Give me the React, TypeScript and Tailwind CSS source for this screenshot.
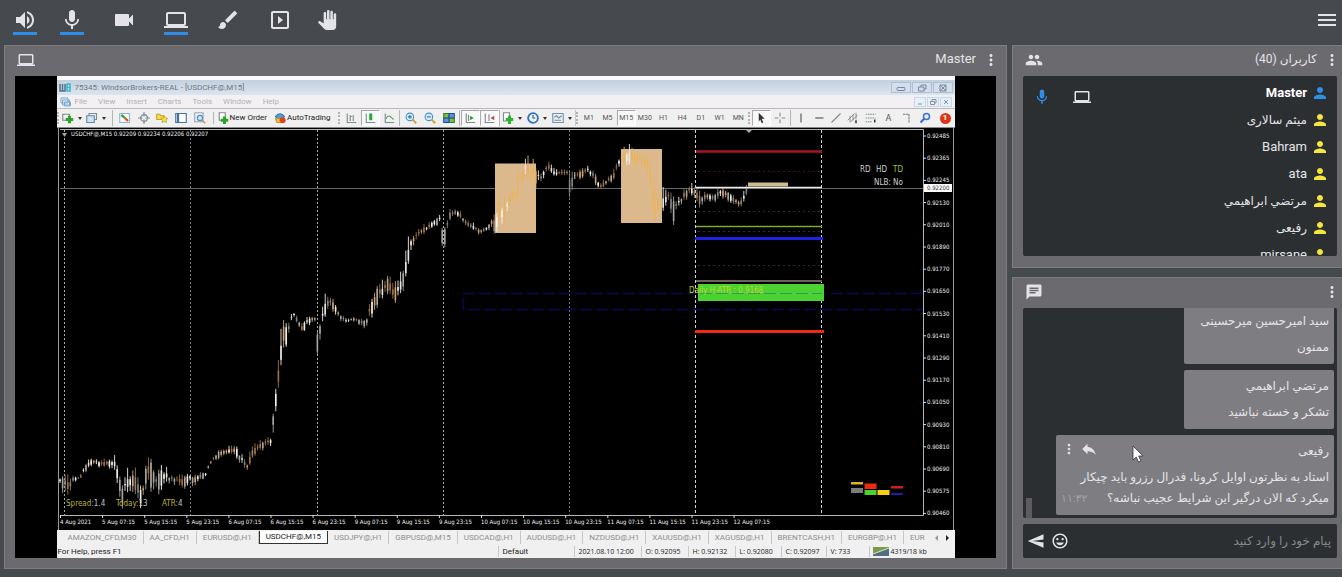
import { useState } from "react";
import type { ReactNode } from "react";
import clsx from "clsx";
import {
    MdBrush,
    MdChat,
    MdLaptop,
    MdMenu,
    MdMic,
    MdMoreVert,
    MdOutlineInsertEmoticon,
    MdOutlineSlideshow,
    MdPanTool,
    MdPeople,
    MdPerson,
    MdReply,
    MdSend,
    MdVideocam,
    MdVolumeUp,
} from "react-icons/md";

const users = [
    { name: "Master", latin: true },
    { name: "میثم سالاری", latin: false },
    { name: "Bahram", latin: true },
    { name: "ata", latin: true },
    { name: "مرتضي ابراهيمي", latin: false },
    { name: "رفیعی", latin: false },
    { name: "mirsane", latin: true },
];

const tabs = [
    "AMAZON_CFD,M30", "AA_CFD,H1", "EURUSD@,H1", "USDCHF@,M15", "USDJPY@,H1", "GBPUSD@,M15", "USDCAD@,H1",
    "AUDUSD@,H1", "NZDUSD@,H1", "XAUUSD@,H1", "XAGUSD@,H1", "BRENTCASH,H1", "EURGBP@,H1", "EUR",
];

const prices = [
    "0.92485", "0.92365", "0.92245", "0.92130", "0.92010", "0.91890", "0.91770", "0.91650", "0.91530",
    "0.91410", "0.91290", "0.91170", "0.91050", "0.90930", "0.90810", "0.90690", "0.90575", "0.90460",
];

const times = [
    "4 Aug 2021", "5 Aug 07:15", "5 Aug 15:15", "5 Aug 23:15", "6 Aug 07:15", "6 Aug 15:15", "6 Aug 23:15",
    "9 Aug 07:15", "9 Aug 15:15", "9 Aug 23:15", "10 Aug 07:15", "10 Aug 15:15", "10 Aug 23:15",
    "11 Aug 07:15", "11 Aug 15:15", "11 Aug 23:15", "12 Aug 07:15",
];

// x, middle of the price, spread of the candles around it
const track: [number, number, number][] = [
    [60, 480, 5], [64, 482, 16], [69, 488, 14], [73, 479, 4], [80, 478, 2], [85, 468, 5], [92, 461, 5],
    [100, 464, 4], [108, 463, 5], [114, 463, 9], [118, 475, 14], [122, 494, 16], [128, 483, 15], [134, 479, 15],
    [142, 498, 14], [146, 472, 16], [152, 470, 18], [156, 482, 16], [162, 475, 14], [170, 478, 9], [182, 482, 8],
    [190, 477, 7], [194, 480, 9], [200, 476, 4], [206, 474, 3], [210, 463, 4], [218, 454, 5], [228, 451, 4],
    [236, 450, 7], [240, 458, 8], [247, 467, 7], [252, 453, 7], [260, 446, 6], [266, 443, 6], [271, 441, 8],
    [273, 420, 22], [276, 397, 14], [280, 362, 20], [283, 332, 20], [287, 333, 10], [290, 325, 8], [293, 312, 5],
    [297, 320, 4], [302, 328, 4], [308, 321, 6], [315, 318, 6], [317, 342, 12], [320, 328, 15], [325, 308, 12],
    [329, 301, 7], [334, 306, 8], [340, 316, 7], [347, 322, 3], [354, 319, 3], [361, 322, 4], [366, 323, 7],
    [370, 310, 12], [374, 302, 12], [377, 294, 12], [383, 292, 11], [388, 282, 10], [393, 293, 11], [399, 290, 12],
    [404, 275, 13], [408, 256, 14], [411, 242, 14], [416, 238, 10], [420, 232, 7], [427, 228, 5], [433, 223, 4],
    [440, 219, 5], [443, 240, 12], [446, 230, 11], [450, 215, 6], [456, 212, 3], [461, 216, 5], [466, 223, 5],
    [473, 227, 4], [480, 232, 5], [487, 228, 3], [492, 222, 8], [496, 226, 12], [499, 207, 15], [503, 214, 18],
    [508, 203, 13], [516, 190, 15], [520, 180, 15], [526, 169, 13], [533, 172, 18], [540, 180, 9], [545, 170, 8],
    [549, 167, 6], [555, 174, 4], [562, 173, 5], [568, 173, 5], [569, 186, 16], [573, 180, 10], [578, 175, 6],
    [588, 170, 5], [594, 176, 7], [600, 187, 4], [607, 181, 4], [614, 175, 6], [618, 163, 8], [622, 157, 9],
    [630, 157, 11], [640, 159, 8], [647, 163, 8], [650, 172, 16], [653, 200, 24], [656, 210, 18], [660, 200, 15],
    [664, 203, 12], [668, 196, 8], [673, 208, 16], [678, 205, 9], [684, 195, 8], [690, 190, 7], [696, 194, 8],
    [700, 200, 11], [706, 196, 6], [714, 198, 5], [720, 192, 8], [727, 194, 6], [734, 200, 6], [740, 204, 5],
    [744, 198, 8], [747, 188, 5],
];

const candleColors = ["#e8e6e2", "#a3703f", "#85827e", "#cfa074", "#f2efe9", "#a8a49e"];

const priceAt = (x: number) => {
    let i = 0;
    while (i < track.length - 2 && track[i + 1][0] <= x) i++;
    const [x0, y0, s0] = track[i];
    const [x1, y1, s1] = track[i + 1];
    const t = (x - x0) / (x1 - x0);
    return [y0 + (y1 - y0) * t, s0 + (s1 - s0) * t];
};

function buildCandles() {
    const out: { x: number; top: number; bottom: number; open: number; close: number; color: string }[] = [];
    for (let x = 60; x < 748; x += 2.6) {
        const [y, s] = priceAt(x);
        const a = Math.abs(Math.sin(x * 12.9) * 43.7) % 1;
        const b = Math.abs(Math.sin(x * 4.7) * 91.3) % 1;
        const spread = s * (0.3 + a * 0.7);
        const mid = y + (b - 0.5) * s * 0.6;
        out.push({
            x,
            top: mid - spread,
            bottom: mid + spread,
            open: mid - spread * b * 0.8,
            close: mid + spread * a * 0.8,
            color: candleColors[Math.floor(b * 6)],
        });
    }
    return out;
}

const candles = buildCandles();

function PriceChart() {
    return (
        <svg viewBox="57 127 898 403" className="w-full h-full font-['DejaVu_Sans_Condensed','DejaVu_Sans',sans-serif]" role="img" aria-label="USDCHF M15">
            <rect x="57" y="127" width="898" height="403" fill="#000" />
            <path d="M57 127.500H955" stroke="#8a8a8a" />
            <path d="M58.500 127V530M953.500 127V530" stroke="#9b9b98" />
            <path d="M60 129.500H923.500V515.500H60" stroke="#b5b5b5" fill="none" />

            {[64.5, 190.5, 317.5, 443.5, 569.5].map((x) => (
                <path key={x} d={`M${x} 130V515`} stroke={x === 190.5 || x === 569.5 ? "#77776f" : "#a9a9a2"} strokeDasharray="2 2" />
            ))}
            <path d="M695.500 130V515M821.500 130V515" stroke="#d0d0d0" strokeDasharray="3 2" />

            <path d="M923 293.500H463.500V309.500H923" stroke="#08085c" strokeWidth="1.500" strokeDasharray="12 4" fill="none" />
            <path d="M60 188.500H923" stroke="#66666e" />

            <rect x="495" y="163.500" width="41" height="69.500" fill="#dcb98c" />
            <rect x="621" y="149" width="41" height="74" fill="#dcb98c" />

            {candles.map((c) => {
                const onBox = (c.x > 495 && c.x < 536) || (c.x > 621 && c.x < 662);
                const bright = c.color === "#f2efe9" || c.color === "#e8e6e2";
                return (
                    <g key={c.x} stroke={onBox && !bright ? "#e9b35e" : c.color}>
                        <path d={`M${c.x} ${c.top}V${c.bottom}`} strokeWidth="0.900" />
                        <path d={`M${c.x} ${c.open}V${c.close}`} strokeWidth="1.600" />
                    </g>
                );
            })}

            <path d="M696 151.500H822" stroke="#a81623" strokeWidth="2.500" />
            <path d="M698 171.500H820" stroke="#4d0d12" strokeDasharray="2 3" />
            <path d="M696 187.500H822" stroke="#e9e9e9" strokeWidth="1.500" />
            <rect x="748" y="182.500" width="40" height="4" fill="#cdbc92" />
            <path d="M698 211.500H820M698 231.500H820M698 265.500H820" stroke="#2f2f2f" strokeDasharray="2 3" />
            <path d="M696 226.500H822" stroke="#7fa82c" strokeWidth="1.500" />
            <path d="M695 238.500H823" stroke="#1f22e0" strokeWidth="3" />
            <path d="M696 281H822" stroke="#6c625b" strokeWidth="2" />
            <rect x="698" y="284" width="126" height="17" fill="#4bd132" />
            <path d="M700 293.500H822" stroke="#2f9b54" strokeDasharray="12 4" />
            <path d="M695 331.500H824" stroke="#ee2a12" strokeWidth="3" />
            <text x="689" y="293" fontSize="8" fill="#c6d62f">Daily H-ATR : 0.9168</text>
            <path d="M745 129h8l-4 4zM62 133h5l-2.500 4z" fill="#a9a9a9" />

            <text x="71" y="136" fontSize="6" fill="#f0f0f0">USDCHF@,M15 0.92209 0.92234 0.92206 0.92207</text>
            <g fontSize="8" fill="#cfcfcf">
                <text x="860" y="172">RD</text>
                <text x="876" y="172">HD</text>
                <text x="893" y="172" fill="#9fc43f">TD</text>
                <text x="874" y="185">NLB: No</text>
                <text x="66" y="506" fill="#b8b23a">Spread:<tspan fill="#b9c4d0">1.4</tspan></text>
                <text x="116" y="506" fill="#b8b23a">Today:<tspan fill="#b9c4d0">13</tspan></text>
                <text x="162" y="506" fill="#b8b23a">ATR:<tspan fill="#b9c4d0">4</tspan></text>
            </g>

            <rect x="851" y="482" width="12" height="2.500" fill="#d8b62c" />
            <rect x="851" y="488" width="12" height="5" fill="#7c7c7c" />
            <rect x="864.500" y="483.500" width="12" height="5.500" fill="#f02a12" />
            <rect x="864.500" y="490" width="12" height="5" fill="#4bd132" />
            <rect x="877.500" y="490" width="12" height="5" fill="#f7cf12" />
            <rect x="891" y="486" width="12" height="2.500" fill="#cf1d1d" />
            <rect x="891" y="493" width="12" height="2" fill="#1c1cb0" />

            <g fontSize="6" fill="#f0f0f0">
                {prices.map((p, i) => (
                    <g key={p}>
                        <path d={`M923 ${136 + i * 22.2}h3`} stroke="#dedede" />
                        <text x="927" y={138 + i * 22.2}>{p}</text>
                    </g>
                ))}
                {times.map((t, i) => (
                    <g key={t}>
                        <path d={`M${60.5 + i * 42.1} 515v3`} stroke="#dedede" />
                        <text x={60 + i * 42.1} y="524">{t}</text>
                    </g>
                ))}
            </g>
            <rect x="924" y="184" width="28" height="8" fill="#fff" />
            <text x="927" y="190" fontSize="6" fill="#333">0.92200</text>
        </svg>
    );
}

function Glyph({ children }: { children: ReactNode }) {
    return (
        <svg viewBox="0 0 16 16" className="w-3 h-3 shrink-0" fill="none" stroke="#7d8b90" strokeWidth="1.500">
            {children}
        </svg>
    );
}

function Tool({ label, pressed, drop, children }: { label: string; pressed?: boolean; drop?: boolean; children: ReactNode }) {
    return (
        <button
            aria-label={label}
            className={clsx(
                "flex-1 min-w-0 h-4 flex items-center justify-center border",
                pressed ? "border-[#a9a9a9] border-b-white border-r-white bg-[#f8f8f8]" : "border-transparent"
            )}
        >
            {children}
            {drop && <span className="ml-1 border-x-2 border-t-[3px] border-x-transparent border-t-[#333]" />}
        </button>
    );
}

function Grip() {
    return <span className="w-1 h-3 shrink-0 border-l-2 border-dotted border-[#b5b5b5]" />;
}

function TerminalToolbar() {
    return (
        <div className="h-[19px] shrink-0 flex items-center bg-[#f1f0f1] border-t border-[#b9b9bb] text-[8px] leading-none text-[#222]">
            <div className="w-[55px] shrink-0 flex items-center pr-1">
                <Grip />
                <Tool label="New chart" drop><Glyph><path d="M1 3h9v8H1z" /><path d="M10 5v10M5 10h10" stroke="#2aa52a" strokeWidth="4" /></Glyph></Tool>
                <Tool label="Profiles" drop><Glyph><path d="M4 5V2h10v8h-3" /><path d="M1 5h10v9H1z" fill="#d5e3f0" stroke="#5d86ad" /></Glyph></Tool>
            </div>
            <div className="w-[101px] shrink-0 flex items-center border-l border-[#b5b5b5] px-[3px]">
                <Tool label="Market watch"><Glyph><path d="M1 2h13v12H1z" fill="#fff" stroke="#8eb4d5" /><path d="m3 4 5 4" stroke="#3aa53a" strokeWidth="3" /><path d="m8 8 4 4" stroke="#d9502a" strokeWidth="3" /></Glyph></Tool>
                <Tool label="Data window"><Glyph><circle cx="8" cy="8" r="4.500" /><path d="M8 0v6M8 10v6M0 8h6M10 8h6" /></Glyph></Tool>
                <Tool label="Navigator"><Glyph><path d="M1 3h4l1 2h4v5H1z" fill="#f5e04a" stroke="#c3a52a" /><path d="m11 5 1.500 3 3 .5-2 2.500.5 3-3-1.500-3 1.500.5-3-2-2.500 3-.5z" fill="#f7e34d" stroke="#b9982a" strokeWidth="1" /></Glyph></Tool>
                <Tool label="Terminal"><Glyph><path d="M1 2h14v12H1z" fill="#fff" stroke="#46709c" /><path d="M4 2v12" stroke="#46709c" strokeWidth="3" /></Glyph></Tool>
                <Tool label="Strategy tester"><Glyph><path d="M1 1h11v12H1z" stroke="#8fa9c4" /><circle cx="8" cy="8" r="3.500" fill="#cfe5f6" stroke="#5e8dbb" /><path d="m11 11 4 4" stroke="#c59b3a" strokeWidth="2" /></Glyph></Tool>
            </div>
            <div className="w-[125px] shrink-0 flex items-center gap-[7px] border-l border-[#b5b5b5] pl-[3px]">
                <button className="flex items-center gap-px whitespace-nowrap">
                    <Glyph><path d="M3 1h8v10H3z" fill="#fff" /><path d="M10 6v10M5 11h10" stroke="#2aa52a" strokeWidth="4" /></Glyph>
                    New Order
                </button>
                <button className="flex items-center gap-px whitespace-nowrap">
                    <Glyph><path d="M2 6c3-5 9-5 12 0l-3 3H4z" fill="#5b9bd1" stroke="#3a78ad" /><path d="M2 9h9l-3 5H4z" fill="#efc63c" stroke="#c79a22" /><circle cx="11.500" cy="11" r="4" fill="#e0401c" stroke="none" /></Glyph>
                    AutoTrading
                </button>
            </div>
            <div className="w-[61px] shrink-0 flex items-center">
                <Grip />
                <Tool label="Bar chart"><Glyph><path d="M3 2v12h12M7 4v8M11 4v8M7 6h2" /></Glyph></Tool>
                <Tool label="Candlesticks" pressed><Glyph><path d="M3 2v12h12" /><path d="M9 2v9" stroke="#22a83a" strokeWidth="4" /></Glyph></Tool>
                <Tool label="Line chart"><Glyph><path d="M3 2v12h12" /><path d="M4 9c3-6 5-4 10 1" stroke="#5a9a5a" /></Glyph></Tool>
            </div>
            <div className="w-[60px] shrink-0 flex items-center border-l border-[#b5b5b5] pl-[2px]">
                <Tool label="Zoom in"><Glyph><circle cx="6.500" cy="6.500" r="5" fill="#d7ecfb" stroke="#4b8fc9" /><path d="M4 6.500h5M6.500 4v5" stroke="#2e6ea8" /><path d="m10 10 5 5" stroke="#d2a53a" strokeWidth="2.500" /></Glyph></Tool>
                <Tool label="Zoom out"><Glyph><circle cx="6.500" cy="6.500" r="5" fill="#d7ecfb" stroke="#4b8fc9" /><path d="M4 6.500h5" stroke="#2e6ea8" /><path d="m10 10 5 5" stroke="#d2a53a" strokeWidth="2.500" /></Glyph></Tool>
                <Tool label="Tile windows"><Glyph><path d="M1 2h7v6H1zM8 8h7v6H8z" fill="#7cc142" stroke="#3c7a2a" /><path d="M8 2h7v6H8zM1 8h7v6H1z" fill="#5296dd" stroke="#224f8d" /></Glyph></Tool>
            </div>
            <div className="w-10 shrink-0 flex items-center border-l border-[#b5b5b5] pl-px">
                <Tool label="Auto scroll" pressed><Glyph><path d="M3 2v12h12M6 4v8" /><path d="m8 5 5 3-5 3z" fill="#2ba53b" stroke="none" /></Glyph></Tool>
                <Tool label="Chart shift" pressed><Glyph><path d="M3 2v12h12M8 3v9" /><path d="m15 5-5 3 5 3z" fill="#a8543a" stroke="none" /></Glyph></Tool>
            </div>
            <div className="w-[76px] shrink-0 flex items-center border-l border-[#b5b5b5]">
                <Tool label="Indicators" drop><Glyph><path d="M2 1h8v11H2z" fill="#fff" /><path d="M10 5v11M5 10h10" stroke="#2cb52c" strokeWidth="4" /></Glyph></Tool>
                <Tool label="Periods" drop><Glyph><circle cx="8" cy="8" r="6.500" fill="#eaf4fd" stroke="#2e72b8" strokeWidth="2.500" /><path d="M8 4v4h3" stroke="#3b5575" /></Glyph></Tool>
                <Tool label="Templates" drop><Glyph><path d="M1 2h14v12H1z" fill="#e9f2f8" stroke="#6d93b5" /><path d="m3 7 3-2 3 3 4-3M3 11h9" /></Glyph></Tool>
            </div>
            <div className="w-[173px] shrink-0 flex items-center border-l border-[#c9c9c9] text-[7px] text-[#555]">
                <Grip />
                {["M1", "M5", "M15", "M30", "H1", "H4", "D1", "W1", "MN"].map((t) => (
                    <Tool key={t} label={t} pressed={t === "M15"}>{t}</Tool>
                ))}
            </div>
            <div className="w-[42px] shrink-0 flex items-center">
                <Grip />
                <Tool label="Cursor" pressed><Glyph><path d="m5 1 8 8H9l2 5-2 1-2-5-2 3z" fill="#333" stroke="none" /></Glyph></Tool>
                <Tool label="Crosshair"><Glyph><path d="M8 1v5M8 10v5M1 8h5M10 8h5" /></Glyph></Tool>
            </div>
            <div className="w-[125px] shrink-0 flex items-center border-l border-[#b5b5b5] pl-[2px] text-[#555]">
                <Tool label="Vertical line"><Glyph><path d="M8 2v12" stroke="#555" /></Glyph></Tool>
                <Tool label="Horizontal line"><Glyph><path d="M3 8h11" stroke="#555" /></Glyph></Tool>
                <Tool label="Trend line"><Glyph><path d="M2 14 14 2" /></Glyph></Tool>
                <Tool label="Channel"><Glyph><path d="m1 11 9-9M4 14 14 4M4 5v8M8 3v8M12 1v9" stroke="#777" strokeWidth="1" /><path d="M12 11v4" stroke="#333" strokeWidth="2" /></Glyph></Tool>
                <Tool label="Fibonacci"><Glyph><path d="M1 3h13M1 8h13M1 13h9" strokeDasharray="2 1" /><path d="M13 10v4" stroke="#333" strokeWidth="2" /></Glyph></Tool>
                <Tool label="Text"><span className="text-[9px]">A</span></Tool>
                <Tool label="Label"><Glyph><path d="M4 3h8v11" strokeDasharray="3 1" stroke="#777" /></Glyph></Tool>
            </div>
            <div className="flex-1 flex items-center justify-between pl-1 pr-1">
                <button aria-label="Search">
                    <Glyph><circle cx="10" cy="6" r="4" fill="#e4effc" stroke="#3a6fd0" strokeWidth="2" /><path d="m7 9-5 5" stroke="#3a6fd0" strokeWidth="3" /></Glyph>
                </button>
                <button className="w-[11px] h-[11px] rounded-full bg-[#dd3417] text-white text-[8px] font-bold leading-none">1</button>
            </div>
        </div>
    );
}

function Terminal() {
    const [tab, setTab] = useState("USDCHF@,M15");

    return (
        <div className="h-full max-w-full aspect-[898/482] flex flex-col overflow-hidden bg-[#f1f0f1] font-[Roboto,sans-serif]">
            <div className="h-1 shrink-0 bg-[#fafafc]" />
            <div className="h-[15px] shrink-0 flex items-center gap-1 px-[2px] bg-gradient-to-b from-[#c3d0dd] to-[#dbe5f0] text-[8px] leading-none text-[#6d7680]">
                <svg viewBox="0 0 12 10" className="w-3 h-[10px]" fill="none" strokeWidth="1.500">
                    <path d="M1 1v7h5V1M3.500 1v7" stroke="#4d7484" />
                    <path d="M8 1h3v3.500H8zM8 4.500h3V8H8z" stroke="#3db3cf" />
                </svg>
                <span>75345: WindsorBrokers-REAL - [USDCHF@,M15]</span>
                <div className="ml-auto flex gap-px">
                    {["Minimize", "Restore", "Close"].map((name) => (
                        <button key={name} aria-label={name} className="w-[20px] h-[11px] flex items-center justify-center border border-[#b0bfd0] bg-[#d3dfec]">
                            <svg viewBox="0 0 12 8" className="w-3 h-2" fill="none" stroke="#7b8697">
                                {name === "Minimize" && <rect x="2" y="3.500" width="8" height="3" rx="1" />}
                                {name === "Restore" && <path d="M5 3V1h5v4H8M2.500 3H8v4H2.500z" />}
                                {name === "Close" && <path d="M3 1h6v6H3zM3 1l6 6M9 1 3 7" />}
                            </svg>
                        </button>
                    ))}
                </div>
            </div>
            <div className="h-[13px] shrink-0 flex items-center px-[3px] bg-[#f2f0f2] text-[8px] leading-none text-[#b3b1b3]">
                <svg viewBox="0 0 12 10" className="w-3 h-[10px] mr-[3px]" fill="#e3eff9" stroke="#7fa9cf">
                    <path d="M1 1h7v5H1zM2.500 3h7v5h-7zM4.500 5h6v4h-6z" />
                </svg>
                <nav className="flex gap-[11px]">
                    {["File", "View", "Insert", "Charts", "Tools", "Window", "Help"].map((m) => (
                        <button key={m}>{m}</button>
                    ))}
                </nav>
                <div className="ml-auto flex gap-px">
                    {["Minimize chart", "Restore chart", "Close chart"].map((name) => (
                        <button key={name} aria-label={name} className="w-3 h-[10px] flex items-center justify-center border border-[#c8d8e6] bg-[#e8f0f7]">
                            <svg viewBox="0 0 8 8" className="w-2 h-2" fill="none" stroke="#8092a5">
                                {name === "Minimize chart" && <path d="M2 6h4" />}
                                {name === "Restore chart" && <path d="M3 3V1.500h4V5H5.500M1.500 3.500h4v3h-4z" />}
                                {name === "Close chart" && <path d="m2 2 4 4M6 2 2 6" />}
                            </svg>
                        </button>
                    ))}
                </div>
            </div>
            <TerminalToolbar />
            <div className="flex-1 min-h-0">
                <PriceChart />
            </div>
            <div className="h-[15px] shrink-0 flex items-center pl-[5px] pr-1 text-[8px] leading-none text-[#8f8f8f]">
                <div className="flex-1 min-w-0 flex items-center overflow-hidden">
                    {tabs.map((t) => (
                        <button
                            key={t}
                            onClick={() => setTab(t)}
                            className={clsx(
                                "shrink-0 h-[13px] px-[6px] whitespace-nowrap last:pr-0 last:border-0",
                                t === tab ? "bg-white text-[#222] border-x border-b border-[#333]" : "border-r border-[#c5c5c5]"
                            )}
                        >
                            {t}
                        </button>
                    ))}
                </div>
                <button aria-label="Previous tabs" className="ml-[3px] border-y-[3px] border-r-[3px] border-y-transparent border-r-[#999]" />
                <button aria-label="Next tabs" className="ml-2 mr-[2px] border-y-[3px] border-l-[3px] border-y-transparent border-l-[#222]" />
            </div>
            <div className="h-[13px] shrink-0 flex items-center text-[8px] leading-[11px] text-[#222] whitespace-nowrap">
                <span className="flex-1 pl-px">For Help, press F1</span>
                <span className="w-[76px] pl-1 border-l border-[#c9c9c9]">Default</span>
                <div className="flex font-['Open_Sans',sans-serif] text-[7px]">
                    <span className="w-[67px] pl-1 border-l border-[#c9c9c9]">2021.08.10 12:00</span>
                    <span className="w-[47px] pl-1 border-l border-[#c9c9c9]">O: 0.92095</span>
                    <span className="w-[47px] pl-1 border-l border-[#c9c9c9]">H: 0.92132</span>
                    <span className="w-[46px] pl-1 border-l border-[#c9c9c9]">L: 0.92080</span>
                    <span className="w-[45px] pl-1 border-l border-[#c9c9c9]">C: 0.92097</span>
                    <span className="w-[43px] pl-1 border-l border-[#c9c9c9]">V: 733</span>
                    <span className="w-[86px] pl-[3px] border-l border-[#c9c9c9] flex items-center gap-[2px]">
                        <svg viewBox="0 0 16 9" className="w-4 h-[9px]">
                            <rect width="16" height="9" fill="#7f9a48" />
                            <path d="M0 9V7l16-6v8z" fill="#4d6f80" />
                            <path d="M0 7 16 1" stroke="#dfe6c8" />
                        </svg>
                        4319/18 kb
                    </span>
                </div>
            </div>
        </div>
    );
}

function BarButton({ label, active, children }: { label: string; active?: boolean; children: ReactNode }) {
    return (
        <button aria-label={label} className={clsx("border-b-[3px]", active ? "border-[#2f8fe8]" : "border-transparent")}>
            {children}
        </button>
    );
}

function Bubble({ name, text, time, wide }: { name: string; text: string; time?: string; wide?: boolean }) {
    return (
        <div className={clsx("shrink-0 rounded-xs bg-[#7e7d82] px-[5px] pt-[2px] pb-[2px]", wide ? "w-[278px]" : "w-[150px]")}>
            <div className="flex items-center justify-between h-[27px]">
                <span>{name}</span>
                {wide && (
                    <span className="flex items-center gap-[3px] pb-1">
                        <button aria-label="پاسخ"><MdReply size={18} /></button>
                        <button aria-label="بیشتر"><MdMoreVert size={16} /></button>
                    </span>
                )}
            </div>
            <p className="pt-[3px] pb-1 leading-[21px]">
                {text}
                {time && <time className="float-left text-[11px] text-[#a3a2a7]">{time}</time>}
            </p>
        </div>
    );
}

export default function App() {
    const [message, setMessage] = useState("");

    return (
        <div className="h-screen flex flex-col overflow-hidden bg-[#46494d] text-[#e4e4e8] font-[Roboto,'DejaVu_Sans',sans-serif] text-[13px]">
            <header className="h-[45px] shrink-0 flex items-start justify-between pt-2 pl-[13px] pr-[3px]">
                <div className="flex gap-7">
                    <div className="flex gap-[23px]">
                        <BarButton label="Speaker" active><MdVolumeUp size={24} /></BarButton>
                        <BarButton label="Microphone" active><MdMic size={24} /></BarButton>
                    </div>
                    <BarButton label="Camera"><MdVideocam size={24} /></BarButton>
                    <BarButton label="Share screen" active><MdLaptop size={24} /></BarButton>
                    <BarButton label="Whiteboard"><MdBrush size={24} /></BarButton>
                    <div className="flex gap-[23px]">
                        <BarButton label="Play media"><MdOutlineSlideshow size={24} /></BarButton>
                        <BarButton label="Raise hand"><MdPanTool size={20} className="m-[2px]" /></BarButton>
                    </div>
                </div>
                <button aria-label="Menu"><MdMenu size={24} /></button>
            </header>

            <main className="flex-1 min-h-0 flex gap-[5px] pl-1 pb-2">
                <section className="flex-1 min-w-0 flex flex-col border border-[#7b7d80] bg-[#6b6a6e] px-[10px] pb-[10px]">
                    <div className="h-[30px] shrink-0 flex items-center justify-between pl-[2px] pb-[3px]">
                        <MdLaptop size={18} />
                        <div className="flex items-center gap-[6px]">
                            <h2 className="pb-[2px]">Master</h2>
                            <button aria-label="More"><MdMoreVert size={18} className="-mr-1" /></button>
                        </div>
                    </div>
                    <div className="flex-1 min-h-0 flex justify-center bg-black">
                        <Terminal />
                    </div>
                </section>

                <aside className="w-[330px] shrink-0 flex flex-col gap-[9px]">
                    <section className="h-[223px] shrink-0 flex flex-col border border-r-0 border-[#7b7d80] bg-[#6b6a6e] pl-[10px] pr-[5px] pb-[11px]">
                        <div className="h-[30px] shrink-0 flex items-center justify-between pl-[2px] pb-[3px]">
                            <MdPeople size={18} />
                            <div className="flex items-center gap-[6px]">
                                <h2 dir="rtl" className="text-xs pb-[2px]">کاربران (40)</h2>
                                <button aria-label="بیشتر"><MdMoreVert size={18} className="-mr-1" /></button>
                            </div>
                        </div>
                        <ul dir="rtl" className="flex-1 min-h-0 overflow-hidden rounded-xs bg-[#2c2f32] pt-[3px] pr-2 pl-[10px]">
                            {users.map((user, i) => (
                                <li key={user.name} className="h-[27px] flex items-center gap-1">
                                    <MdPerson size={18} className={i === 0 ? "text-[#2f8fe8]" : "text-[#f5e63c]"} />
                                    <span className={clsx("leading-none", !user.latin && "text-xs", i === 0 && "font-bold text-white")}>{user.name}</span>
                                    {i === 0 && (
                                        <span className="mr-auto pt-2 flex gap-[22px]">
                                            <MdLaptop size={18} />
                                            <MdMic size={18} className="text-[#2f8fe8]" />
                                        </span>
                                    )}
                                </li>
                            ))}
                        </ul>
                    </section>

                    <section className="flex-1 min-h-0 flex flex-col border border-r-0 border-[#7b7d80] bg-[#6b6a6e] pl-[10px] pr-[5px] pb-[10px]">
                        <div className="h-[30px] shrink-0 flex items-center justify-between pl-[2px] pb-[3px]">
                            <MdChat size={18} />
                            <button aria-label="بیشتر"><MdMoreVert size={18} className="-mr-1" /></button>
                        </div>
                        <div dir="rtl" className="relative flex-1 min-h-0 overflow-hidden rounded-xs bg-[#2c2f32] flex flex-col justify-end gap-[6px] pr-[3px] pb-[3px] text-xs">
                            <Bubble name="سيد اميرحسين ميرحسينی" text="ممنون" />
                            <Bubble name="مرتضي ابراهيمي" text="تشکر و خسته نباشید" />
                            <Bubble
                                wide
                                name="رفیعی"
                                text="استاد به نظرتون اوایل کرونا، فدرال رزرو باید چیکار میکرد که الان درگیر این شرایط عجیب نباشه؟"
                                time="۱۱:۳۲"
                            />
                            <span className="absolute left-[3px] bottom-0 w-[6px] h-5 bg-[#5c5b60]" />
                            <svg viewBox="0 0 12 18" className="absolute left-[109px] bottom-[55px] w-3 h-[18px]">
                                <path d="M1 1v14l3.200-3 2.300 5 2.400-1.100L6.700 11H11z" fill="#fff" stroke="#333" strokeWidth="0.800" />
                            </svg>
                        </div>
                        <form
                            onSubmit={(e) => e.preventDefault()}
                            className="mt-[6px] h-[34px] shrink-0 flex items-center gap-[6px] rounded-xs bg-[#2c2f32] pl-1 pr-[6px]"
                        >
                            <button type="submit" aria-label="ارسال"><MdSend size={18} className="-scale-x-100" /></button>
                            <button type="button" aria-label="شکلک"><MdOutlineInsertEmoticon size={18} /></button>
                            <input
                                dir="rtl"
                                aria-label="پیام"
                                value={message}
                                onChange={(e) => setMessage(e.target.value)}
                                placeholder="پیام خود را وارد کنید"
                                className="flex-1 min-w-0 bg-transparent text-xs placeholder:text-[#88898c] outline-none"
                            />
                        </form>
                    </section>
                </aside>
            </main>
        </div>
    );
}
